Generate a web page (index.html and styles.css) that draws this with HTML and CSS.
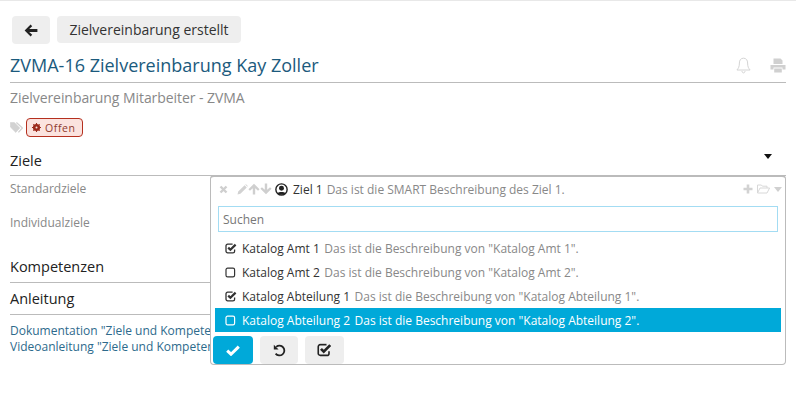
FILE: index.html
```html
<!DOCTYPE html>
<html lang="de">
<head>
    <meta charset="UTF-8">
    <meta name="viewport" content="width=device-width, initial-scale=1.0">
    <title>Zielvereinbarung</title>
    <link rel="stylesheet" href="styles.css">
</head>
<body>
    <div class="page">
        <div class="toolbar">
            <button class="btn btn-back">
                <svg width="14" height="13" viewBox="0 0 14 13"><path d="M6.6 0.6 L8.2 2.2 L5.2 5 H13.4 V8 H5.2 L8.2 10.8 L6.6 12.4 L0.6 6.5 Z" fill="#222"/></svg>
            </button>
            <button class="btn btn-status">Zielvereinbarung erstellt</button>
        </div>

        <div class="title-row">
            <h1>ZVMA-16 Zielvereinbarung Kay Zoller</h1>
            <div class="title-icons">
                <svg width="15" height="17" viewBox="0 0 15 17"><path d="M7.5 1.2 C4.6 1.2 3.4 3.4 3.4 6 C3.4 9.6 2.4 11.4 0.9 13 H14.1 C12.6 11.4 11.6 9.6 11.6 6 C11.6 3.4 10.4 1.2 7.5 1.2 Z M6 14 C6 15.2 6.7 15.9 7.5 15.9 C8.3 15.9 9 15.2 9 14" fill="none" stroke="#d4d4d4" stroke-width="1"/></svg>
                <svg width="16" height="15" viewBox="0 0 16 15"><path d="M3.5 0.5 H10.5 L12.5 2.5 V6 H3.5 Z M0.5 7 H15.5 V11.5 H12.5 V9.5 H3.5 V11.5 H0.5 Z M4.2 10.5 H11.8 V14.5 H4.2 Z" fill="#d0d0d0"/></svg>
            </div>
        </div>

        <div class="subtitle">Zielvereinbarung Mitarbeiter - ZVMA</div>

        <div class="tags">
            <svg class="tag-icon" width="13" height="11" viewBox="0 0 13 11"><path d="M0.4 0.6 H4.4 L9.8 6 L5.8 10.4 L0.4 5 Z" fill="#d2d2d2" stroke="#d2d2d2" stroke-width="0.6" stroke-linejoin="round"/><path d="M6.4 0.6 L12.4 6 L8.4 10.4" fill="none" stroke="#d2d2d2" stroke-width="1.3" stroke-linejoin="round"/></svg>
            <span class="badge">
                <svg width="9" height="9" viewBox="0 0 9 9"><circle cx="4.5" cy="4.5" r="2.6" fill="none" stroke="#9c2a1c" stroke-width="2"/><path d="M4.5 0 V9 M0 4.5 H9 M1.3 1.3 L7.7 7.7 M7.7 1.3 L1.3 7.7" stroke="#9c2a1c" stroke-width="1.1"/><circle cx="4.5" cy="4.5" r="1" fill="#fbe3df"/></svg>
                Offen
            </span>
        </div>

        <div class="section section-ziele">
            <span>Ziele</span>
            <span class="caret"></span>
        </div>

        <div class="goals">
            <div class="goal-label">Standardziele</div>
            <div class="goal-label">Individualziele</div>
        </div>

        <div class="section">Kompetenzen</div>
        <div class="section">Anleitung</div>

        <div class="links">
            <a>Dokumentation "Ziele und Kompetenzen"</a>
            <a>Videoanleitung "Ziele und Kompetenzen"</a>
        </div>

        <div class="popup">
            <div class="popup-head">
                <svg class="head-x" width="9" height="9" viewBox="0 0 9 9"><path d="M1.5 1.5 L7.5 7.5 M7.5 1.5 L1.5 7.5" stroke="#cfcfcf" stroke-width="2.4"/></svg>
                <svg width="11" height="11" viewBox="0 0 11 11"><path d="M0.5 10.5 L1.2 7.6 L7.6 1.2 L9.8 3.4 L3.4 9.8 Z M8.2 0.6 L9 0.2 L10.8 2 L10.4 2.8 Z" fill="#d2d2d2"/></svg>
                <svg width="12" height="12" viewBox="0 0 11 11"><path d="M5.5 0.8 L10.6 5.8 L9.2 7.2 L6.6 4.7 V10.6 H4.4 V4.7 L1.8 7.2 L0.4 5.8 Z" fill="#cfcfcf"/></svg>
                <svg width="12" height="12" viewBox="0 0 11 11"><path d="M5.5 10.2 L10.6 5.2 L9.2 3.8 L6.6 6.3 V0.4 H4.4 V6.3 L1.8 3.8 L0.4 5.2 Z" fill="#cfcfcf"/></svg>
                <svg class="head-user" width="13" height="13" viewBox="0 0 12 12"><circle cx="6" cy="6" r="5.2" fill="none" stroke="#222" stroke-width="1.3"/><circle cx="6" cy="4.8" r="2.3" fill="#222"/><path d="M2.4 9.6 C3 7.8 9 7.8 9.6 9.6 C8 11.2 4 11.2 2.4 9.6 Z" fill="#222"/></svg>
                <span class="item-name">Ziel 1</span>
                <span class="item-desc">Das ist die SMART Beschreibung des Ziel 1.</span>
                <div class="head-tools">
                    <svg width="10" height="10" viewBox="0 0 10 10"><path d="M3.7 0.5 H6.3 V3.7 H9.5 V6.3 H6.3 V9.5 H3.7 V6.3 H0.5 V3.7 H3.7 Z" fill="#d2d2d2"/></svg>
                    <svg width="13" height="10" viewBox="0 0 13 10"><path d="M0.5 9 V1 H4.4 L5.4 2.2 H10 V4 M0.5 9 L3 4 H12.6 L10 9 Z" fill="none" stroke="#d8d8d8" stroke-width="1"/></svg>
                    <span class="caret caret-small"></span>
                </div>
            </div>

            <input class="search" type="text" placeholder="Suchen">

            <ul class="options">
                <li class="option">
                    <svg class="check" width="12" height="11" viewBox="0 0 12 11"><use href="#box-checked"/></svg>
                    <span class="item-name">Katalog Amt 1</span>
                    <span class="item-desc">Das ist die Beschreibung von "Katalog Amt 1".</span>
                </li>
                <li class="option">
                    <svg class="check" width="12" height="11" viewBox="0 0 12 11"><use href="#box-empty"/></svg>
                    <span class="item-name">Katalog Amt 2</span>
                    <span class="item-desc">Das ist die Beschreibung von "Katalog Amt 2".</span>
                </li>
                <li class="option">
                    <svg class="check" width="12" height="11" viewBox="0 0 12 11"><use href="#box-checked"/></svg>
                    <span class="item-name">Katalog Abteilung 1</span>
                    <span class="item-desc">Das ist die Beschreibung von "Katalog Abteilung 1".</span>
                </li>
                <li class="option option-active">
                    <svg class="check" width="12" height="11" viewBox="0 0 12 11"><use href="#box-empty"/></svg>
                    <span class="item-name">Katalog Abteilung 2</span>
                    <span class="item-desc">Das ist die Beschreibung von "Katalog Abteilung 2".</span>
                </li>
            </ul>

            <div class="popup-actions">
                <button class="btn btn-ok">
                    <svg width="14" height="11" viewBox="0 0 14 11"><path d="M1.2 5.6 L5 9.2 L12.8 1.6" fill="none" stroke="#fff" stroke-width="3"/></svg>
                </button>
                <button class="btn btn-undo">
                    <svg width="13" height="13" viewBox="0 0 13 13"><path d="M3.2 2.9 A4.9 4.9 0 1 1 2.6 9.6" fill="none" stroke="#222" stroke-width="1.8"/><path d="M0.8 0.8 L5.6 5.4 H0.8 Z" fill="#222"/></svg>
                </button>
                <button class="btn btn-all">
                    <svg width="15" height="14" viewBox="0 0 12 11"><use href="#box-checked"/></svg>
                </button>
            </div>
        </div>
    </div>

    <svg class="defs" width="0" height="0">
        <symbol id="box-empty" viewBox="0 0 12 11">
            <rect x="1" y="1.2" width="8.6" height="8.6" rx="1.6" fill="none" stroke="currentColor" stroke-width="1.2"/>
        </symbol>
        <symbol id="box-checked" viewBox="0 0 12 11">
            <path d="M9.6 6.4 V8.2 A1.6 1.6 0 0 1 8 9.8 H2.6 A1.6 1.6 0 0 1 1 8.2 V2.8 A1.6 1.6 0 0 1 2.6 1.2 H7.6" fill="none" stroke="currentColor" stroke-width="1.3"/>
            <path d="M3.2 4.6 L5.4 6.8 L10.6 1.6" fill="none" stroke="currentColor" stroke-width="2.2"/>
        </symbol>
    </svg>
</body>
</html>
```

FILE: styles.css
```css
* {
    box-sizing: border-box;
}

body {
    font-family: "Open Sans", sans-serif;
    font-size: 12px;
    color: #333;
    background-color: #fff;
    margin: 0;
}

.page {
    position: relative;
    height: 413px;
    padding: 15px 10px 0;
    border-top: 1px solid #e8e8e8;
    overflow: hidden;
}

.defs {
    position: absolute;
}

.btn {
    display: flex;
    align-items: center;
    justify-content: center;
    border: none;
    border-radius: 4px;
    background-color: #eee;
    color: #222;
    font-family: inherit;
    padding: 0;
}

.toolbar {
    display: flex;
    gap: 7px;
    padding-left: 2px;
}

.btn-back {
    width: 38px;
    height: 28px;
}

.btn-status {
    width: 184px;
    height: 27px;
    font-size: 14px;
    color: #333;
}

.title-row {
    display: flex;
    justify-content: space-between;
    align-items: center;
    height: 39px;
    padding-top: 4px;
    border-bottom: 1px solid #bbb;
}

h1 {
    font-size: 18px;
    font-weight: 400;
    color: #1b5a7d;
    margin: 0;
}

.title-icons {
    display: flex;
    align-items: center;
    gap: 19px;
}

.subtitle {
    font-size: 14px;
    color: #888;
    margin-top: 5px;
    line-height: 20px;
    letter-spacing: -0.06px;
}

.tags {
    display: flex;
    align-items: center;
    gap: 3px;
    margin-top: 10px;
    height: 19px;
}

.badge {
    display: flex;
    align-items: center;
    gap: 4px;
    height: 19px;
    padding: 0 6px 0 5px;
    font-size: 10.5px;
    letter-spacing: 0.6px;
    color: #8f3a2e;
    background-color: #fbe3df;
    border: 1px solid #b5301f;
    border-radius: 4px;
}

.section {
    display: flex;
    justify-content: space-between;
    align-items: center;
    border-bottom: 1px solid #bbb;
    font-size: 14.5px;
    color: #222;
    height: 32px;
}

.section-ziele {
    height: 39px;
    padding-top: 8px;
    padding-right: 14px;
}

.caret {
    width: 0;
    height: 0;
    border-left: 4px solid transparent;
    border-right: 4px solid transparent;
    border-top: 5px solid #111;
    margin-top: -8px;
}

.goals {
    height: 75px;
    padding-top: 4px;
}

.goal-label {
    color: #888;
    height: 34px;
    line-height: 17px;
}

.links {
    display: flex;
    flex-direction: column;
    margin-top: 8px;
    color: #2d6a8c;
    line-height: 16px;
}

.popup {
    position: absolute;
    left: 210px;
    top: 174px;
    width: 576px;
    height: 190px;
    background-color: #fff;
    border: 1px solid #bbb;
    border-top-width: 2px;
    border-radius: 4px;
    padding: 0 4px 0 2px;
}

.popup-head {
    display: flex;
    align-items: center;
    height: 24px;
    padding-left: 6px;
}

.head-x {
    margin-right: 9px;
}

.head-user {
    margin: 0 5px 0 3px;
}

.head-tools {
    display: flex;
    align-items: center;
    gap: 4px;
    margin-left: auto;
    margin-right: -1px;
}

.caret-small {
    border-top-color: #d0d0d0;
    margin-top: 0;
}

.item-name {
    color: #333;
    margin-right: 4px;
}

.option .item-name {
    margin-right: 4.5px;
}

.item-desc {
    color: #888;
}

.search {
    display: block;
    width: 560px;
    height: 26px;
    margin: 5px 0 0 5px;
    padding: 0 4px;
    border: 1px solid #a3dcf3;
    font-family: inherit;
    font-size: 12px;
    color: #333;
    outline: none;
}

.search::placeholder {
    color: #777;
    opacity: 1;
}

.options {
    list-style: none;
    margin: 4px 0 0 2px;
    padding: 0;
}

.option {
    display: flex;
    align-items: center;
    height: 24px;
    padding-left: 10px;
}

.check {
    color: #333;
    margin-right: 5px;
}

.option-active {
    background-color: #00a9d9;
}

.option-active .check,
.option-active .item-name,
.option-active .item-desc {
    color: #fff;
}

.popup-actions {
    display: flex;
    gap: 7px;
    margin-top: 4px;
}

.popup-actions .btn {
    height: 28px;
}

.btn-ok {
    width: 40px;
    background-color: #00a9d9;
}

.btn-undo {
    width: 38px;
}

.btn-all {
    width: 39px;
}
```
